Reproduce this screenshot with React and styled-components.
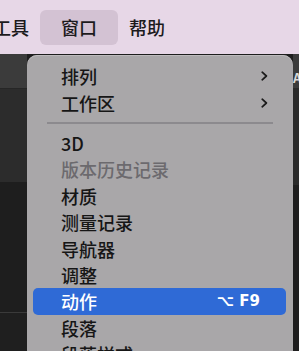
import React from 'react';
import styled, { createGlobalStyle } from 'styled-components';

const GlobalStyle = createGlobalStyle`
  html, body {
    margin: 0;
    padding: 0;
    overflow: hidden;
    background: #1e1e1e;
  }
  body {
    font-family: "Noto Sans CJK SC", "Noto Sans", "DejaVu Sans", sans-serif;
  }
`;

const menuTitles = [
  { label: '工具' },
  { label: '窗口', active: true },
  { label: '帮助' },
];

const menuItems = [
  { label: '排列', submenu: true },
  { label: '工作区', submenu: true },
  { separator: true },
  { label: '3D' },
  { label: '版本历史记录', disabled: true },
  { label: '材质' },
  { label: '测量记录' },
  { label: '导航器' },
  { label: '调整' },
  { label: '动作', selected: true, shortcut: '⌥ F9' },
  { label: '段落' },
  { label: '段落样式' },
];

function Chevron() {
  return (
    <svg width="7" height="10" viewBox="0 0 7 10">
      <path d="M1.2 1.2 L5.4 5 L1.2 8.8" fill="none" stroke="#1b1b1b" strokeWidth="1.7" strokeLinecap="round" strokeLinejoin="round" />
    </svg>
  );
}

function App() {
  return (
    <Screen>
      <GlobalStyle />
      <MenuBar>
        {menuTitles.map((t) => (
          <MenuTitle key={t.label} $active={t.active}>
            {t.label}
          </MenuTitle>
        ))}
      </MenuBar>
      <Workspace>
        <LeftPanel />
        <Dropdown>
          {menuItems.map((item, i) =>
            item.separator ? (
              <Separator key={i} />
            ) : (
              <Item key={i} $selected={item.selected} $disabled={item.disabled}>
                <span>{item.label}</span>
                {item.submenu && <Chevron />}
                {item.shortcut && <Shortcut>{item.shortcut}</Shortcut>}
              </Item>
            )
          )}
        </Dropdown>
        <RightPanel>
          <PanelLabel>A</PanelLabel>
        </RightPanel>
      </Workspace>
    </Screen>
  );
}

const Screen = styled.div`
  width: 299px;
  height: 351px;
  overflow: hidden;
  display: flex;
  flex-direction: column;
`;

const MenuBar = styled.div`
  height: 54px;
  flex-shrink: 0;
  display: flex;
  align-items: center;
  gap: 1px;
  margin-left: -17px;
  background: #e7d7e7;
`;

const MenuTitle = styled.div`
  height: 35px;
  display: flex;
  align-items: center;
  padding: 0 ${(p) => (p.$active ? '21px' : '10px')};
  border-radius: 6px;
  font-size: 18px;
  font-weight: 500;
  color: #1c1a1c;
  background: ${(p) => (p.$active ? '#d3c2d3' : 'transparent')};
`;

const Workspace = styled.div`
  flex: 1;
  display: grid;
  grid-template-columns: 27px 266px 6px;
  background: #1e1e1e;
`;

const LeftPanel = styled.div`
  background: linear-gradient(
    to bottom,
    #3b3b3b 0px,
    #3b3b3b 34px,
    #262626 34px,
    #262626 35px,
    #2c2c2c 35px,
    #2c2c2c 128px,
    #1e1e1e 128px,
    #1e1e1e 258px,
    #3a3a3a 258px,
    #3a3a3a 259px,
    #1f1f1f 259px
  );
`;

const RightPanel = styled.div`
  position: relative;
  overflow: hidden;
  background: linear-gradient(
    to bottom,
    #3b3b3b 0px,
    #3b3b3b 34px,
    #2a2a2a 34px,
    #2a2a2a 131px,
    #1e1e1e 131px
  );
`;

const PanelLabel = styled.span`
  position: absolute;
  left: 0;
  top: 14px;
  font-size: 13px;
  font-weight: 700;
  color: #d8d8d8;
`;

const Dropdown = styled.div`
  margin-top: 1px;
  padding: 8px 7px 0 6px;
  background: #a9a7a9;
  border-radius: 10px 10px 0 0;
  box-shadow: inset 0 1px 0 #bdbbbd;
`;

const Item = styled.div`
  height: 26.4px;
  display: flex;
  align-items: center;
  justify-content: space-between;
  padding: 0 18px 0 28px;
  border-radius: 5px;
  font-size: 18px;
  font-weight: 500;
  white-space: nowrap;
  color: ${(p) => (p.$selected ? '#ffffff' : p.$disabled ? '#6c6a6e' : '#161616')};
  background: ${(p) => (p.$selected ? '#2f6ad6' : 'transparent')};
`;

const Shortcut = styled.span`
  margin-right: 8px;
  font-family: "DejaVu Sans", "Noto Sans", sans-serif;
  font-size: 15px;
  font-weight: 700;
  color: #ffffff;
`;

const Separator = styled.div`
  height: 1.5px;
  margin: 6.5px 13px 6px 14px;
  background: #8c8a8e;
`;

export default App;
